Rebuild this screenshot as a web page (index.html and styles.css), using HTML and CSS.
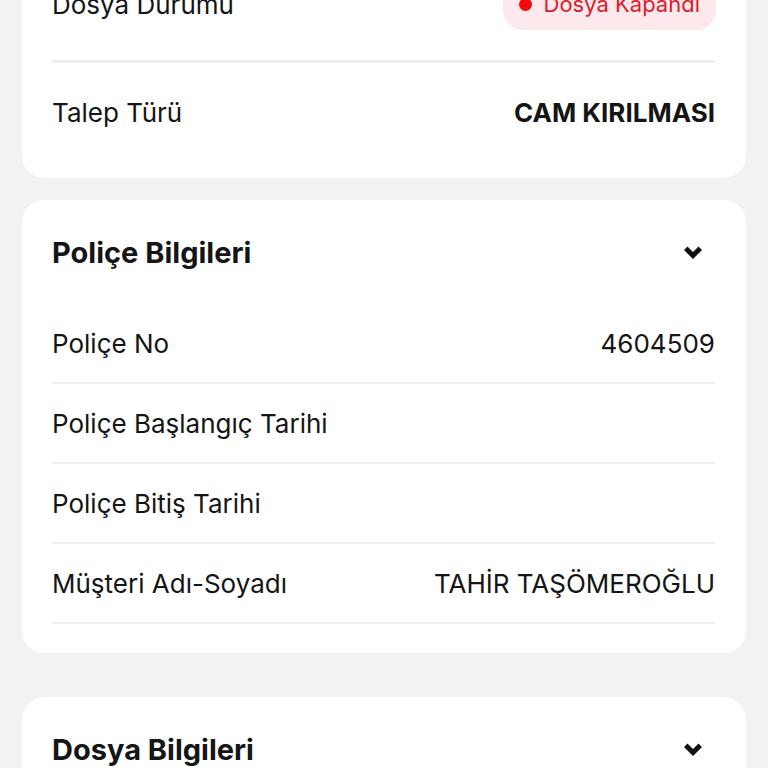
FILE: index.html
```html
<!DOCTYPE html>
<html lang="tr">
<head>
    <meta charset="UTF-8">
    <meta name="viewport" content="width=device-width, initial-scale=1.0">
    <title>Hasar Dosyası</title>
    <link rel="stylesheet" href="styles.css">
</head>
<body>

    <div class="page">

        <!-- Dosya ozeti (sayfa kaydirilmis, ust kismi ekran disinda) -->
        <div class="card summary-card">
            <div class="summary-row status-row">
                <span class="label">Dosya Durumu</span>
                <span class="status-badge"><span class="status-dot"></span>Dosya Kapandı</span>
            </div>
            <div class="summary-row last">
                <span class="label">Talep Türü</span>
                <span class="value strong">CAM KIRILMASI</span>
            </div>
        </div>

        <div class="card">
            <div class="card-header">
                <h2>Poliçe Bilgileri</h2>
                <svg class="chevron" width="18" height="14" viewBox="0 0 18 14">
                    <polygon points="0,4 3.5,0.5 9,6 14.5,0.5 18,4 9,13" fill="#111"/>
                </svg>
            </div>
            <div class="info-row">
                <span class="label">Poliçe No</span>
                <span class="value">4604509</span>
            </div>
            <div class="info-row">
                <span class="label">Poliçe Başlangıç Tarihi</span>
                <span class="value"></span>
            </div>
            <div class="info-row">
                <span class="label">Poliçe Bitiş Tarihi</span>
                <span class="value"></span>
            </div>
            <div class="info-row">
                <span class="label">Müşteri Adı-Soyadı</span>
                <span class="value">TAHİR TAŞÖMEROĞLU</span>
            </div>
        </div>

        <div class="card next-section">
            <div class="card-header">
                <h2>Dosya Bilgileri</h2>
                <svg class="chevron" width="18" height="14" viewBox="0 0 18 14">
                    <polygon points="0,4 3.5,0.5 9,6 14.5,0.5 18,4 9,13" fill="#111"/>
                </svg>
            </div>
            <div class="info-row">
                <span class="label">Dosya No</span>
                <span class="value"></span>
            </div>
        </div>

    </div>

</body>
</html>
```

FILE: styles.css
```css
body {
    font-family: Inter, 'Noto Sans', sans-serif;
    background-color: #f2f2f2;
    margin: 0;
    color: #151515;
    overflow: hidden;
}

.page {
    padding: 0 22px;
}

.card {
    background-color: #ffffff;
    border-radius: 22px;
    padding: 0 31px 29px 30px;
    margin-bottom: 22px;
}

.summary-card {
    margin-top: -52px; /* scrolled: top of the card is above the screen */
    padding-bottom: 18px;
}

.next-section {
    margin-top: 44px;
}

.summary-row {
    display: flex;
    justify-content: space-between;
    align-items: center;
    padding: 30px 0;
    border-bottom: 3px solid #efefef;
}

.summary-row.last {
    border-bottom: none;
    height: 36px;
    padding-top: 31px;
    padding-bottom: 30px;
}

.label {
    font-size: 26px;
    font-weight: 400;
}

.value {
    font-size: 26px;
    font-weight: 400;
}

.value.strong {
    font-weight: 700;
}

.status-badge {
    display: flex;
    align-items: center;
    gap: 12px;
    height: 52px;
    padding: 0 16px 0 16px;
    margin-right: -1px;
    background-color: #fde9eb;
    border-radius: 20px;
    color: #e01b2c;
    font-size: 22px;
}

.status-dot {
    width: 13px;
    height: 13px;
    border-radius: 50%;
    background-color: #f80a0a;
}

.card-header {
    display: flex;
    justify-content: space-between;
    align-items: center;
    height: 104px;
    padding-top: 1px;
    box-sizing: border-box;
}

.card-header h2 {
    margin: 0;
    font-size: 29px;
    font-weight: 700;
}

.chevron {
    margin-right: 13px;
}

.info-row {
    display: flex;
    justify-content: space-between;
    align-items: center;
    height: 78px;
    border-bottom: 2px solid #eeeeee;
}
```
